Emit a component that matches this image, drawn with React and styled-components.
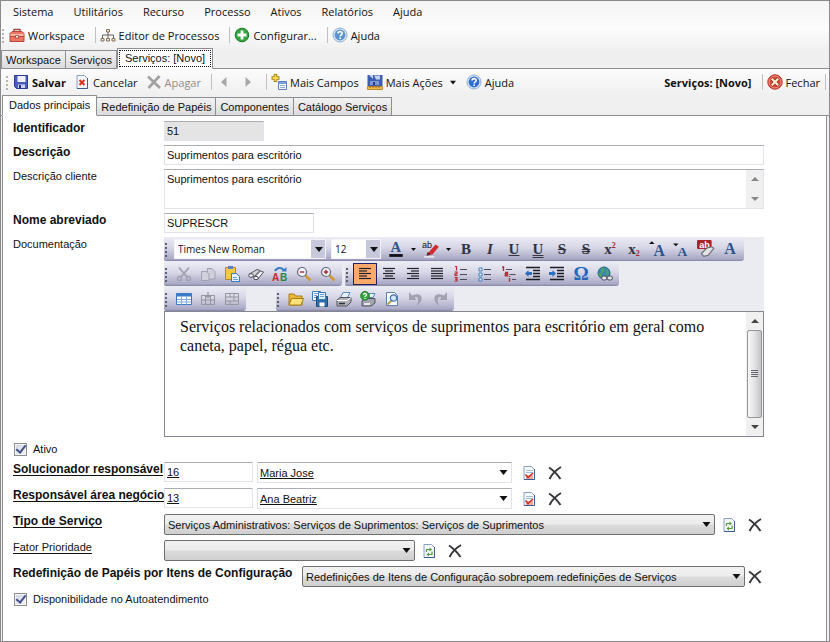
import React, { useState } from 'react';
import styled, { createGlobalStyle, css } from 'styled-components';

const GlobalStyle = createGlobalStyle`
  * {
    box-sizing: border-box;
  }
  body {
    margin: 0;
    font-family: "Liberation Sans", Arial, sans-serif;
    font-size: 11px;
    color: #111;
    background: #fff;
  }
  button, input, select, textarea {
    font: inherit;
    color: inherit;
    margin: 0;
    border-radius: 0;
  }
  button {
    border: 0;
    padding: 0;
    background: none;
  }
`;

const uiFont = '"Open Sans", "Segoe UI", sans-serif';

const Window = styled.div`
  min-height: 100vh;
  display: flex;
  flex-direction: column;
  border: 1px solid #8c8a8c;
  background: #f0f0f0;
`;

const Header = styled.header`
  background: linear-gradient(#f4f4f4, #fcfcfc 40%, #efefef 75%);
`;

const MenuBar = styled.nav`
  display: flex;
  gap: 2px;
  height: 21px;
  padding-left: 3px;
`;

const MenuItem = styled.button`
  padding: 0 9px;
  font-family: ${uiFont};
  font-size: 11px;
  line-height: 18px;
`;

const ToolBar = styled.div`
  display: flex;
  align-items: center;
  height: 26px;
  font-family: ${uiFont};
  font-size: 11px;
  padding-left: ${p => (p.$inset ? '4px' : '0')};
  background: ${p => (p.$inset ? 'linear-gradient(#fcfcfc, #f0f0f0)' : 'none')};
`;

const Grip = styled.span`
  flex: none;
  width: 8px;
  height: 15px;
  background: radial-gradient(circle at 2px 2px, ${p => p.$color || '#b4b4b8'} 1px, transparent 1px) 0 0 / 8px 4px;
`;

const ToolButton = styled.button`
  display: flex;
  align-items: center;
  gap: 3px;
  height: 22px;
  white-space: nowrap;
  font-weight: ${p => (p.$bold ? 'bold' : 'normal')};
  color: ${p => (p.disabled ? '#8d8d8d' : '#111')};

  & + & {
    margin-left: 8px;
  }
`;

const DropMark = styled.span`
  display: flex;
  padding: 0 2px 0 4px;
`;

const Separator = styled.span`
  width: 1px;
  height: 16px;
  margin: 0 4px 0 10px;
  background: #c0c0c2;
`;

const Title = styled.strong`
  margin-left: auto;
`;

const EdgeSeparator = styled(Separator)`
  margin: 0 3px 0 5px;
`;

const TabStrip = styled.div`
  display: flex;
  align-items: flex-end;
  height: 21px;
  padding-left: ${p => (p.$inset ? '1px' : '0')};
  background: ${p => (p.$inset ? '#f0f0f0' : 'none')};
  border-bottom: 1px solid #8c8e94;
`;

const Tab = styled.button`
  height: 18px;
  padding: 0 4px;
  border: 1px solid #8c8e94;
  border-bottom: 0;
  border-left-width: ${p => (p.$first || p.$active ? '1px' : '0')};
  background: linear-gradient(#f2f2f2, #dcdcde);
  white-space: nowrap;

  ${p => p.$active && css`
    height: 21px;
    padding: 0 6px 2px;
    margin-bottom: -1px;
    background: #fff;
    border-bottom: 1px solid #fff;
  `}
`;

const FocusedTab = styled(Tab)`
  padding: 0 1px;

  span {
    display: block;
    height: 17px;
    padding: 0 5px;
    line-height: 15px;
    border: 1px dotted #111;
  }
`;

const Panel = styled.main`
  flex: 1;
  margin: 0 2px 0 1px;
  padding: 5px 62px 5px 10px;
  border: 1px solid #8c8e94;
  border-width: 0 1px 0 1px;
  background: #fff;
`;

const Form = styled.form`
  display: flex;
  flex-direction: column;
  gap: 4px;
`;

const Row = styled.div`
  display: flex;
  align-items: flex-start;
`;

const LookupRow = styled(Row)`
  height: 22px;
  padding-top: 1px;
`;

const Label = styled.label`
  flex: none;
  width: ${p => (p.$wide ? '289px' : '151px')};
  font-size: ${p => (p.$bold ? '12px' : '11px')};
  font-weight: ${p => (p.$bold ? 'bold' : 'normal')};
  line-height: 14px;
  white-space: nowrap;
  text-decoration: ${p => (p.$link ? 'underline' : 'none')};
  text-underline-offset: 2px;
`;

const fieldBorder = css`
  border: 1px solid #e2e3ea;
  border-top-color: #abadb3;
`;

const TextInput = styled.input`
  ${fieldBorder}
  flex: ${p => (p.$width ? 'none' : 1)};
  width: ${p => (p.$width ? `${p.$width}px` : 'auto')};
  min-width: 0;
  height: 20px;
  padding: 0 2px;
  outline: none;
  text-decoration: ${p => (p.$link ? 'underline' : 'none')};
  background: ${p => (p.readOnly ? '#e4e4e4' : '#fff')};
`;

const CodeInput = styled(TextInput)`
  margin-right: 4px;
`;

const AreaBox = styled.div`
  ${fieldBorder}
  flex: 1;
  display: flex;
  height: 40px;
`;

const Area = styled.textarea`
  flex: 1;
  border: 0;
  outline: 0;
  resize: none;
  padding: 2px;
  line-height: 14px;
  overflow: hidden;
`;

const ScrollTrack = styled.div`
  flex: none;
  width: 17px;
  display: flex;
  flex-direction: column;
  justify-content: space-between;
  align-items: center;
  background: #f0f0f0;
`;

const ScrollButton = styled.button`
  display: grid;
  place-items: center;
  width: 17px;
  height: 18px;
`;

const ScrollThumb = styled.div`
  flex: 1;
  width: 15px;
  max-height: 88px;
  margin-bottom: auto;
  display: grid;
  place-items: center;
  border: 1px solid #97979a;
  border-radius: 2px;
  background: linear-gradient(90deg, #f6f6f6, #e6e6e8 45%, #c4c4c8);
`;

const SelectWrap = styled.span`
  position: relative;
  display: flex;
  flex: ${p => (p.$width ? 'none' : 1)};
  width: ${p => (p.$width ? `${p.$width}px` : 'auto')};
  min-width: 0;

  svg {
    position: absolute;
    right: 4px;
    top: 8px;
    pointer-events: none;
  }
`;

const SelectBox = styled.select`
  appearance: none;
  width: 100%;
  height: 21px;
  padding: 0 18px 0 3px;
  outline: none;

  ${p => p.$flat ? css`
    ${fieldBorder}
    padding-left: 2px;
    background: #fff;
    text-decoration: underline;
  ` : css`
    border: 1px solid #707070;
    border-radius: 2px;
    background: linear-gradient(#f2f2f2, #ebebeb 48%, #dcdcdc 52%, #cfcfcf);
  `}
`;

const RowIcons = styled.span`
  display: flex;
  align-items: center;
  height: 22px;
  gap: 10px;
  padding: 0 1px 0 ${p => p.$lead}px;
`;

const IconButton = styled.button`
  display: grid;
  place-items: center;
  width: 16px;
  height: 20px;
`;

const TickRow = styled.label`
  display: flex;
  align-items: center;
  gap: 6px;
  height: 16px;
  padding-left: 1px;
`;

const Tick = styled.input`
  appearance: none;
  display: grid;
  place-items: center;
  width: 13px;
  height: 13px;
  border: 1px solid #8e8f8f;
  background: linear-gradient(135deg, #cfd4de, #f6f7f9);
  box-shadow: inset 0 0 0 1px #f4f4f4;

  &:checked::after {
    content: "";
    width: 4px;
    height: 8px;
    margin-top: -2px;
    border: solid #43518f;
    border-width: 0 2px 2px 0;
    transform: rotate(38deg);
  }
`;

const Editor = styled.div`
  flex: 1;
  min-width: 0;
`;

const EditorBars = styled.div`
  display: flex;
  flex-direction: column;
  gap: 1px;
  background: #ebecf2;
`;

const BarLine = styled.div`
  display: flex;
  gap: ${p => p.$gap || 0}px;
`;

const Bar = styled.div`
  display: flex;
  align-items: center;
  height: 24px;
  padding-right: 2px;
  border-radius: 2px 3px 3px 2px;
  background: linear-gradient(#ececf5, #d6d6e6 45%, #a9a8c6 92%, #8482a2);
`;

const BarButton = styled.button`
  display: grid;
  place-items: center;
  width: 24px;
  height: 22px;
  border: ${p => (p.$active ? '1px solid #20206c' : '0')};
  background: ${p => (p.$active ? '#fcaa6c' : 'none')};
`;

const SplitArrow = styled.button`
  display: grid;
  place-items: center;
  width: 11px;
  height: 22px;
`;

const BarSelect = styled.span`
  position: relative;
  display: flex;
  width: ${p => p.$width}px;
  margin: 0 ${p => p.$after}px 0 ${p => p.$before}px;

  select {
    appearance: none;
    width: 100%;
    height: 20px;
    padding: 0 16px 0 3px;
    border: 1px solid #f2f2f8;
    outline: none;
    background: linear-gradient(90deg, #fff calc(100% - 14px), #c8c8dc calc(100% - 14px));
    font-family: ${uiFont};
    font-size: 10px;
  }

  svg {
    position: absolute;
    right: 3px;
    top: 8px;
    pointer-events: none;
  }
`;

const Glyph = styled.span`
  font-family: "Liberation Serif", "Times New Roman", serif;
  font-size: ${p => p.$size || 15}px;
  font-weight: bold;
  font-style: ${p => (p.$italic ? 'italic' : 'normal')};
  line-height: 18px;
  color: ${p => p.$color || '#34343e'};
  text-decoration: ${p => p.$line || 'none'};
  text-decoration-thickness: 1px;
  white-space: nowrap;

  small {
    font-size: 8px;
    line-height: 0;
    color: #b0202c;
    vertical-align: ${p => (p.$sub ? '-2px' : '6px')};
  }
`;

const Document = styled.div`
  display: flex;
  height: 126px;
  border: 1px solid #828790;
`;

const DocumentText = styled.textarea`
  flex: 1;
  border: 0;
  outline: none;
  resize: none;
  padding: 5px 15px;
  overflow: hidden;
  font-family: "Liberation Serif", "Times New Roman", serif;
  font-size: 16px;
  line-height: 19px;
`;

const Svg = ({ children, size = 16 }) => (
  <svg width={size} height={size} viewBox="0 0 16 16" fill="none" aria-hidden="true">{children}</svg>
);

const Caret = ({ w = 7 }) => (
  <svg width={w} height="5" viewBox="0 0 8 5" aria-hidden="true"><path d="M0 0h8L4 5z" fill="#111" /></svg>
);

const ScrollArrow = ({ up, color = '#555' }) => (
  <svg width="8" height="4" viewBox="0 0 8 4"><path d={up ? 'M0 4h8L4 0z' : 'M0 0h8L4 4z'} fill={color} /></svg>
);

const Page = ({ children }) => (
  <>
    <path d="M3 1.5h7.5L13.5 4.5v10H3z" fill="#f4f8ff" stroke="#8aa0c0" />
    <path d="M13.5 4v10.5H3" stroke="#3d5c90" />
    {children}
  </>
);

const Help = ({ soft }) => (
  <Svg>
    <circle cx="8" cy="8" r="7" fill="#dce9f7" stroke="#8fb0d4" />
    <circle cx="8" cy="8" r="5.4" fill={soft ? '#5b93cc' : '#2f6fd0'} />
    <path d="M6 6.6c0-2.6 4.2-2.6 4.2-.2 0 1.5-2 1.5-2 3M8.2 10.6v1.4" stroke="#fff" strokeWidth="1.6" />
  </Svg>
);

const Lines = ({ rows }) => (
  <Svg>
    {rows.map(([x, w], i) => <path key={i} d={`M${x} ${2.5 + i * 2.5}h${w}`} stroke="#22222c" strokeWidth="1.2" />)}
  </Svg>
);

const icons = {
  toolbox: (
    <Svg>
      <path d="M5 5V2.5h6V5" stroke="#a04a40" strokeWidth="1.4" />
      <path d="M1 6.5L3 4.5h10l2 2v8H1z" fill="#ee7565" stroke="#b8483c" />
      <path d="M1.5 7h13v2h-13z" fill="#fbb8aa" />
      <path d="M1 9.5h14" stroke="#b8483c" />
      <path d="M6.5 8.5h3V11h-3z" fill="#ffe9d8" stroke="#8a3a30" strokeWidth=".7" />
    </Svg>
  ),
  tree: (
    <Svg>
      <path d="M8 5v3M2.5 11V8h11v3M8 8v3" stroke="#66605c" />
      <path d="M6.5 2.5h3V5h-3zM1 11.5h3V14H1zM6.5 11.5h3V14h-3zM12 11.5h3V14h-3z" fill="#f5ecd8" stroke="#85705a" />
    </Svg>
  ),
  plus: (
    <Svg>
      <circle cx="8" cy="8" r="6.8" fill="#31a63a" stroke="#1c7a28" />
      <path d="M8 3.5v9M3.5 8h9" stroke="#fff" strokeWidth="2.8" />
    </Svg>
  ),
  save: (
    <Svg>
      <path d="M1.5 1.5h13v13h-11l-2-2z" fill="#4a5fc0" stroke="#2c3a94" />
      <path d="M4.5 2h8v6h-8z" fill="#eef1fb" />
      <path d="M5 10.5h7V14H5z" fill="#cfd5ec" />
      <path d="M6 11h2v3H6z" fill="#27327c" />
    </Svg>
  ),
  cancel: <Svg><Page><path d="M5.5 6l5 5M10.5 6l-5 5" stroke="#d8301c" strokeWidth="2" /></Page></Svg>,
  erase: <Svg><path d="M2 2.5L14 14M13.5 2L2.5 14" stroke="#a2a2a2" strokeWidth="2.6" /></Svg>,
  prev: <Svg><path d="M10.5 3v10L5 8z" fill="#a9a9a9" /></Svg>,
  next: <Svg><path d="M5.5 3v10L11 8z" fill="#a9a9a9" /></Svg>,
  fields: (
    <Svg>
      <path d="M4.5 0v8M.5 4h8" stroke="#a58214" strokeWidth="3.6" />
      <path d="M4.5 1v6M1.5 4h6" stroke="#f8dc50" strokeWidth="1.8" />
      <path d="M7.5 7.5h8v8h-8z" fill="#f4f9ff" stroke="#5c82be" />
      <path d="M8 8h7v2H8z" fill="#7ca4dc" />
      <path d="M9 11.5h5M9 13.5h5" stroke="#90b0dc" />
    </Svg>
  ),
  actions: (
    <Svg>
      <path d="M.5 1h15v11H.5z" fill="#3d5db2" />
      <path d="M2 1l4 4V1zM7 1.5h6v4H9z" fill="#c4d0ee" />
      <path d="M3 7h9v4H3z" fill="#8298d4" />
      <path d="M6 8h2v3H6z" fill="#263c84" />
      <path d="M.5 12.5h15v3H.5z" fill="#f0bc48" stroke="#ac7418" strokeWidth=".8" />
      <path d="M3 12v2M6 12v2M9 12v2M12 12v2" stroke="#7c5410" strokeWidth=".8" />
    </Svg>
  ),
  close: (
    <Svg>
      <circle cx="8" cy="8" r="7.2" fill="#da4636" stroke="#b43020" />
      <circle cx="8" cy="8" r="6" stroke="#f0988c" />
      <path d="M4.5 4.5l7 7M11.5 4.5l-7 7" stroke="#9a3024" strokeWidth="3.2" />
      <path d="M4.8 4.8l6.4 6.4M11.2 4.8l-6.4 6.4" stroke="#fff2d8" strokeWidth="2" />
    </Svg>
  ),
  remove: <Svg><path d="M2 2.5C6 5 10 9 13.5 14M14 2C9 5 5 9 2.5 14" stroke="#38383c" strokeWidth="2" /></Svg>,
  lookup: (
    <Svg>
      <Page>
        <path d="M5 5.5h7M5 7.5h7" stroke="#a9bcdc" />
        <path d="M5 10h7v4H5z" fill="#e9aaa4" />
        <path d="M4.5 9.5l2.5 3 5-4.5" stroke="#cc3428" strokeWidth="1.6" />
      </Page>
    </Svg>
  ),
  refresh: (
    <Svg>
      <Page>
        <path d="M5.5 9V6.5H9M11 8.5v3H7.5" stroke="#549a38" strokeWidth="1.2" />
        <path d="M8.5 4.5l2.5 2-2.5 2zM8 9.5l-2.5 2 2.5 2z" fill="#549a38" />
      </Page>
    </Svg>
  ),
  cut: (
    <Svg>
      <path d="M3 1.5l8 9.5M13 1.5L5 11" stroke="#a0a0b2" strokeWidth="1.8" />
      <circle cx="3.5" cy="12.5" r="2" stroke="#a0a0b2" strokeWidth="1.6" />
      <circle cx="12.5" cy="12.5" r="2" stroke="#a0a0b2" strokeWidth="1.6" />
    </Svg>
  ),
  copy: (
    <Svg>
      <path d="M7.5 2.5H12l3 3V13H7.5z" fill="#d0d0dc" stroke="#a0a0b2" />
      <path d="M1.5 5.5h5L9 8v6.5H1.5z" fill="#d0d0dc" stroke="#a0a0b2" />
    </Svg>
  ),
  paste: (
    <Svg>
      <path d="M1.5 1.5h10v12h-10z" fill="#f6c944" stroke="#b48820" />
      <path d="M4 0h5v3H4z" fill="#5c82b4" />
      <path d="M7.5 7.5h5l3 3v5h-8z" fill="#e6f2ff" stroke="#3878bc" />
      <path d="M9 11.5h4M9 13.5h5" stroke="#6ca0d8" />
    </Svg>
  ),
  find: (
    <Svg>
      <path d="M1.5 8L9 3.5l3 1L5.5 11z" fill="#d4d4da" stroke="#54545e" />
      <path d="M6 11.5L12.5 5l3 1L10 13z" fill="#f3f3f5" stroke="#54545e" />
      <ellipse cx="3" cy="9.5" rx="2.3" ry="1.8" fill="#fff" stroke="#44444e" />
      <ellipse cx="8" cy="12" rx="2.3" ry="1.7" fill="#fff" stroke="#44444e" />
    </Svg>
  ),
  zoomOut: (
    <Svg>
      <path d="M9 9l5.5 5.5" stroke="#cf9a38" strokeWidth="2.6" />
      <circle cx="6" cy="6" r="4.5" fill="#f6f6fc" stroke="#66667c" strokeWidth="1.2" />
      <path d="M3.8 6h4.4" stroke="#a82828" strokeWidth="1.4" />
    </Svg>
  ),
  zoomIn: (
    <Svg>
      <path d="M9 9l5.5 5.5" stroke="#cf9a38" strokeWidth="2.6" />
      <circle cx="6" cy="6" r="4.5" fill="#f6f6fc" stroke="#66667c" strokeWidth="1.2" />
      <path d="M3.8 6h4.4M6 3.8v4.4" stroke="#a82828" strokeWidth="1.4" />
    </Svg>
  ),
  left: <Lines rows={[[2, 12], [2, 8], [2, 12], [2, 8], [2, 12]]} />,
  center: <Lines rows={[[2, 12], [4, 8], [2, 12], [4, 8], [2, 12]]} />,
  right: <Lines rows={[[2, 12], [6, 8], [2, 12], [6, 8], [2, 12]]} />,
  justify: <Lines rows={[[2, 12], [2, 12], [2, 12], [2, 12], [2, 12]]} />,
  numbered: (
    <Svg>
      <path d="M2 .5h1.5v4M1.5 6H4v1.8H2v1.7h2.5M1.5 11.5H4V15H1.5M2 13.2h2" stroke="#bc2830" strokeWidth="1.2" />
      <path d="M7 3.5h7M7 8.5h7M7 13.5h7" stroke="#4c4c60" strokeWidth="1.2" />
    </Svg>
  ),
  bullets: (
    <Svg>
      <path d="M2 2h3v3H2zM2 7h3v3H2zM2 12h3v3H2z" fill="#e8f2ff" stroke="#3f7ec4" />
      <path d="M7 3.5h7M7 8.5h7M7 13.5h7" stroke="#4c4c60" strokeWidth="1.2" />
    </Svg>
  ),
  outline: (
    <Svg>
      <path d="M1 1h1.5v4M4 6.5h2.5v3.2H4.3V8H6M8.5 12v3.5M8.5 10v1" stroke="#bc2830" strokeWidth="1.4" />
      <path d="M5 3.5h6M8.5 8.5h6M11 13.5h4" stroke="#4c4c60" strokeWidth="1.2" />
    </Svg>
  ),
  outdent: (
    <Svg>
      <path d="M1 1.5h14M8 4.5h7M8 7.5h7M8 10.5h7M1 13.5h14" stroke="#1c1c26" strokeWidth="1.4" />
      <path d="M0 7.5L3.5 4v2H7v3H3.5v2z" fill="#2c70c2" />
    </Svg>
  ),
  indent: (
    <Svg>
      <path d="M1 1.5h14M8 4.5h7M8 7.5h7M8 10.5h7M1 13.5h14" stroke="#1c1c26" strokeWidth="1.4" />
      <path d="M7 7.5L3.5 4v2H0v3h3.5v2z" fill="#2c70c2" />
    </Svg>
  ),
  link: (
    <Svg>
      <circle cx="7" cy="7" r="6" fill="#3a88ae" stroke="#286484" />
      <path d="M4 2c3 0 4 2 2 4s-4 1-4 2 2 3 3 4M10 3l2 4-3 2" fill="#4ca468" stroke="#4ca468" />
      <rect x="4.5" y="10" width="5.5" height="4" rx="2" fill="#e2e2ea" stroke="#50505e" />
      <rect x="10" y="10" width="5.5" height="4" rx="2" fill="#e2e2ea" stroke="#50505e" />
    </Svg>
  ),
  table: (
    <Svg>
      <path d="M.5 2.5h15v11H.5z" fill="#fff" stroke="#3c78c4" />
      <path d="M.5 2.5h15v3H.5z" fill="#3c7ccc" />
      <path d="M1 8.5h14M1 11h14M5.5 5.5v8M10.5 5.5v8" stroke="#84aade" />
    </Svg>
  ),
  rowAdd: (
    <Svg>
      <path d="M1.5 4.5h13v9h-13zM1.5 9h13M5.5 4.5v9M10.5 4.5v9" stroke="#96969f" />
      <path d="M8 1v6M6 5l2 2 2-2" stroke="#88889a" />
    </Svg>
  ),
  rowDelete: <Svg><path d="M1.5 2.5h13v11h-13zM1.5 6h13M1.5 10h13M6 2.5V6M10 6v4M6 10v3.5M10 2.5V6" stroke="#96969f" /></Svg>,
  open: (
    <Svg>
      <path d="M1 3h5l1.5 2H14v9H1z" fill="#ecb934" stroke="#a87c14" />
      <path d="M3.5 7.5h12L13 14H1z" fill="#fde27a" stroke="#a87c14" />
    </Svg>
  ),
  disk: (
    <Svg>
      <path d="M.5.5h8v9h-8z" fill="#fff" stroke="#3c7ab8" />
      <path d="M2 2.5h5M2 4.5h3M2 6.5h3" stroke="#6ca0d8" />
      <path d="M4.5 5.5h11v10h-11z" fill="#2c6ea8" stroke="#1c4c7c" />
      <path d="M6.5 1.5h7v7h-7z" fill="#e4f0fb" stroke="#3c7ab8" />
      <path d="M8 3.5h4M8 5.5h4" stroke="#6ca0d8" />
      <path d="M7.5 11.5h5v4h-5z" fill="#fff" />
    </Svg>
  ),
  print: (
    <Svg>
      <path d="M7 1.5h7l-3 6H4z" fill="#e8f2ff" stroke="#5888bc" />
      <path d="M1 9l3-2.5h11V11l-4 4H1z" fill="#b0b0b8" stroke="#54545e" />
      <path d="M1 9.5h10l4-3" stroke="#fff" />
      <path d="M3 12.5h6" stroke="#33333c" strokeWidth="1.5" />
    </Svg>
  ),
  printHelp: (
    <Svg>
      <path d="M9 2.5h6l-2 4H8z" fill="#e8f2ff" stroke="#5888bc" />
      <path d="M2 10l3-2.5h10V12l-4 3H2z" fill="#a4a4ae" stroke="#54545e" />
      <path d="M4 13h6" stroke="#fff" strokeWidth="1.5" />
      <circle cx="5" cy="4.8" r="4.3" fill="#32a838" stroke="#1c7c24" />
      <path d="M3.5 3.8c0-1.8 3-1.8 3 0 0 1-1.5 1-1.5 2.2M5 7v1" stroke="#fff" strokeWidth="1.3" />
    </Svg>
  ),
  preview: (
    <Svg>
      <path d="M2.5 1.5h8l3 3v10h-11z" fill="#fff" stroke="#5c82b0" />
      <path d="M7.5 9.5L3.5 13.5" stroke="#c49a3c" strokeWidth="2" />
      <circle cx="9.5" cy="7" r="3.2" fill="#d2e8fa" stroke="#3f74ac" strokeWidth="1.2" />
    </Svg>
  ),
  undo: <Svg><path d="M1 1v8h8L6.5 6.5c3-1.5 5 1 2.5 8.5 7-5 6-13-1.5-11.5L4 4.5z" fill="#a2a2b2" /></Svg>,
  redo: <Svg><path d="M15 1v8H7l2.5-2.5C6.5 5 4.5 7.5 7 15 0 10 1 2 8.5 3.5l3.5 1z" fill="#a2a2b2" /></Svg>,
};

const FontColor = () => (
  <Svg size={18}>
    <text x="3" y="11" fontFamily="Liberation Serif" fontWeight="bold" fontSize="13" fill="#2c548c">A</text>
    <path d="M2 12.5h12V15H2z" fill="#10101c" />
  </Svg>
);

const Highlight = () => (
  <Svg size={18}>
    <path d="M5 12l7-8 3 2-6 7z" fill="#d02c30" />
    <path d="M5 10.5l3 2.5-4 1z" fill="#6c2420" />
    <path d="M2 15h9" stroke="#e8e8f0" strokeWidth="1.5" />
    <text x="0" y="7" fontFamily="Liberation Sans" fontSize="8" fill="#111">ab</text>
  </Svg>
);

const Replace = () => (
  <Svg>
    <text x="0" y="15" fontFamily="Liberation Sans" fontWeight="bold" fontSize="10" fill="#c8282c">A</text>
    <text x="8" y="15" fontFamily="Liberation Sans" fontWeight="bold" fontSize="10" fill="#2c8448">B</text>
    <path d="M3 5c2-4 7-4 9-.5" stroke="#3c7cc4" strokeWidth="2" />
    <path d="M9.5 5.5h5V1z" fill="#3c7cc4" />
  </Svg>
);

const ClearFormat = () => (
  <Svg size={18}>
    <rect x="0" y="0" width="13" height="8" rx="1" fill="#b02028" />
    <text x="2" y="7" fontFamily="Liberation Sans" fontWeight="bold" fontSize="8" fill="#fff">ab</text>
    <path d="M4 12l5-5 4-1 2 1.5-5 6-4 1z" fill="#e4e4e8" stroke="#6a6a74" />
  </Svg>
);

const Grow = ({ down }) => (
  <Svg size={18}>
    <path d={down ? 'M0 3h5L2.5 5.5z' : 'M0 3.5h5L2.5 1z'} fill="#111" />
    <text x="4" y="14" fontFamily="Liberation Serif" fontWeight="bold" fontSize={down ? 12 : 14} fill="#2c548c">A</text>
  </Svg>
);

const formats = [
  ['Negrito', <Glyph>B</Glyph>],
  ['Itálico', <Glyph $italic>I</Glyph>],
  ['Sublinhado', <Glyph $line="underline">U</Glyph>],
  ['Sublinhado duplo', <Glyph $line="underline double">U</Glyph>],
  ['Tachado', <Glyph $line="line-through">S</Glyph>],
  ['Tachado duplo', <Glyph $line="line-through double">S</Glyph>],
  ['Sobrescrito', <Glyph>x<small>2</small></Glyph>],
  ['Subscrito', <Glyph $sub>x<small>2</small></Glyph>],
  ['Aumentar fonte', <Grow />],
  ['Diminuir fonte', <Grow down />],
  ['Limpar formatação', <ClearFormat />],
  ['Fonte', <Glyph $color="#2c548c" $size={16}>A</Glyph>],
];

const clipboard = [
  ['Recortar', icons.cut], ['Copiar', icons.copy], ['Colar', icons.paste], ['Localizar', icons.find],
  ['Substituir', <Replace />], ['Reduzir', icons.zoomOut], ['Ampliar', icons.zoomIn],
];

const paragraph = [
  ['Esquerda', icons.left], ['Centro', icons.center], ['Direita', icons.right], ['Justificar', icons.justify],
  ['Numeração', icons.numbered], ['Marcadores', icons.bullets], ['Vários níveis', icons.outline],
  ['Diminuir recuo', icons.outdent], ['Aumentar recuo', icons.indent],
  ['Símbolo', <Glyph $color="#2468bc" $size={19}>Ω</Glyph>], ['Link', icons.link],
];

const tables = [['Tabela', icons.table], ['Inserir linha', icons.rowAdd], ['Excluir linha', icons.rowDelete]];

const files = [
  ['Abrir', icons.open], ['Salvar documento', icons.disk], ['Imprimir', icons.print],
  ['Configurar impressão', icons.printHelp], ['Visualizar', icons.preview],
  ['Desfazer', icons.undo], ['Refazer', icons.redo],
];

function EditorBar({ items, active, children }) {
  return (
    <Bar>
      <Grip $color="#5c5c74" />
      {children}
      {items.map(([name, icon]) => (
        <BarButton key={name} type="button" title={name} aria-label={name} $active={name === active}>{icon}</BarButton>
      ))}
    </Bar>
  );
}

function Scroll({ thumb }) {
  return (
    <ScrollTrack>
      <ScrollButton type="button" aria-label="Rolar para cima"><ScrollArrow up color={thumb ? '#444' : '#888'} /></ScrollButton>
      {thumb && (
        <ScrollThumb>
          <svg width="7" height="8" viewBox="0 0 7 8"><path d="M0 .5h7M0 2.5h7M0 4.5h7M0 6.5h7" stroke="#66666c" /></svg>
        </ScrollThumb>
      )}
      <ScrollButton type="button" aria-label="Rolar para baixo"><ScrollArrow color={thumb ? '#444' : '#888'} /></ScrollButton>
    </ScrollTrack>
  );
}

function Select({ id, value, width, flat, label }) {
  return (
    <SelectWrap $width={width}>
      <SelectBox id={id} $flat={flat} aria-label={label} defaultValue={value}>
        <option value={value}>{value}</option>
      </SelectBox>
      <Caret w={9} />
    </SelectWrap>
  );
}

function RowActions({ icon, lead = 6 }) {
  return (
    <RowIcons $lead={lead}>
      {icon && <IconButton type="button" aria-label="Consultar">{icon}</IconButton>}
      <IconButton type="button" aria-label="Remover">{icons.remove}</IconButton>
    </RowIcons>
  );
}

function PersonRow({ id, label, code, name }) {
  return (
    <LookupRow>
      <Label htmlFor={id} $bold $link>{label}</Label>
      <CodeInput id={id} $width={89} $link defaultValue={code} />
      <Select flat width={255} value={name} label={`${label} nome`} />
      <RowActions icon={icons.lookup} lead={9} />
    </LookupRow>
  );
}

const menus = ['Sistema', 'Utilitários', 'Recurso', 'Processo', 'Ativos', 'Relatórios', 'Ajuda'];

export default function App() {
  const [active, setActive] = useState(true);
  const [selfService, setSelfService] = useState(true);

  return (
    <>
      <GlobalStyle />
      <Window>
        <Header>
          <MenuBar>
            {menus.map(m => <MenuItem key={m} type="button">{m}</MenuItem>)}
          </MenuBar>
          <ToolBar>
            <Grip />
            <ToolButton>{icons.toolbox}Workspace</ToolButton>
            <Separator />
            <ToolButton>{icons.tree}Editor de Processos</ToolButton>
            <Separator />
            <ToolButton>{icons.plus}Configurar...</ToolButton>
            <Separator />
            <ToolButton><Help soft />Ajuda</ToolButton>
          </ToolBar>
          <TabStrip>
            <Tab type="button" $first>Workspace</Tab>
            <Tab type="button">Serviços</Tab>
            <FocusedTab type="button" $active><span>Serviços: [Novo]</span></FocusedTab>
          </TabStrip>
        </Header>
        <ToolBar $inset>
          <Grip />
          <ToolButton $bold>{icons.save}Salvar</ToolButton>
          <ToolButton>{icons.cancel}Cancelar</ToolButton>
          <ToolButton disabled>{icons.erase}Apagar</ToolButton>
          <Separator />
          <ToolButton aria-label="Anterior" disabled>{icons.prev}</ToolButton>
          <ToolButton aria-label="Próximo" disabled>{icons.next}</ToolButton>
          <Separator />
          <ToolButton>{icons.fields}Mais Campos</ToolButton>
          <ToolButton>{icons.actions}Mais Ações<DropMark><Caret w={6} /></DropMark></ToolButton>
          <ToolButton><Help />Ajuda</ToolButton>
          <Title>Serviços: [Novo]</Title>
          <Separator />
          <ToolButton>{icons.close}Fechar</ToolButton>
          <EdgeSeparator />
        </ToolBar>
        <TabStrip $inset>
          <Tab type="button" $active>Dados principais</Tab>
          <Tab type="button">Redefinição de Papéis</Tab>
          <Tab type="button">Componentes</Tab>
          <Tab type="button">Catálogo Serviços</Tab>
        </TabStrip>
        <Panel>
          <Form onSubmit={e => e.preventDefault()}>
            <Row>
              <Label htmlFor="ident" $bold>Identificador</Label>
              <TextInput id="ident" $width={100} readOnly value="51" />
            </Row>
            <Row>
              <Label htmlFor="descricao" $bold>Descrição</Label>
              <TextInput id="descricao" defaultValue="Suprimentos para escritório" />
            </Row>
            <Row>
              <Label htmlFor="cliente">Descrição cliente</Label>
              <AreaBox>
                <Area id="cliente" defaultValue="Suprimentos para escritório" />
                <Scroll />
              </AreaBox>
            </Row>
            <Row>
              <Label htmlFor="nome" $bold>Nome abreviado</Label>
              <TextInput id="nome" $width={150} defaultValue="SUPRESCR" />
            </Row>
            <Row>
              <Label htmlFor="doc">Documentação</Label>
              <Editor>
                <EditorBars>
                  <BarLine>
                    <EditorBar items={formats}>
                      <BarSelect $width={152} $before={2} $after={5}>
                        <select aria-label="Nome da fonte"><option>Times New Roman</option></select>
                        <Caret w={8} />
                      </BarSelect>
                      <BarSelect $width={50} $before={0} $after={3}>
                        <select aria-label="Tamanho da fonte"><option>12</option></select>
                        <Caret w={8} />
                      </BarSelect>
                      <BarButton type="button" aria-label="Cor da fonte"><FontColor /></BarButton>
                      <SplitArrow type="button" aria-label="Escolher cor"><Caret w={5} /></SplitArrow>
                      <BarButton type="button" aria-label="Realce"><Highlight /></BarButton>
                      <SplitArrow type="button" aria-label="Escolher realce"><Caret w={5} /></SplitArrow>
                    </EditorBar>
                  </BarLine>
                  <BarLine $gap={3}>
                    <EditorBar items={clipboard} />
                    <EditorBar items={paragraph} active="Esquerda" />
                  </BarLine>
                  <BarLine $gap={30}>
                    <EditorBar items={tables} />
                    <EditorBar items={files} />
                  </BarLine>
                </EditorBars>
                <Document>
                  <DocumentText
                    id="doc"
                    defaultValue="Serviços relacionados com serviços de suprimentos para escritório em geral como caneta, papel, régua etc."
                  />
                  <Scroll thumb />
                </Document>
              </Editor>
            </Row>
            <TickRow>
              <Tick type="checkbox" checked={active} onChange={e => setActive(e.target.checked)} />
              Ativo
            </TickRow>
            <PersonRow id="solucionador" label="Solucionador responsável" code="16" name="Maria Jose" />
            <PersonRow id="responsavel" label="Responsável área negócio" code="13" name="Ana Beatriz" />
            <LookupRow>
              <Label htmlFor="tipo" $bold $link>Tipo de Serviço</Label>
              <Select id="tipo" value="Serviços Administrativos: Serviços de Suprimentos: Serviços de Suprimentos" />
              <RowActions icon={icons.refresh} />
            </LookupRow>
            <LookupRow>
              <Label htmlFor="fator" $link>Fator Prioridade</Label>
              <Select id="fator" width={251} value="" />
              <RowActions icon={icons.refresh} />
            </LookupRow>
            <LookupRow>
              <Label htmlFor="papeis" $bold $wide>Redefinição de Papéis por Itens de Configuração</Label>
              <Select id="papeis" value="Redefinições de Itens de Configuração sobrepoem redefinições de Serviços" />
              <RowActions lead={2} />
            </LookupRow>
            <TickRow>
              <Tick type="checkbox" checked={selfService} onChange={e => setSelfService(e.target.checked)} />
              Disponibilidade no Autoatendimento
            </TickRow>
          </Form>
        </Panel>
      </Window>
    </>
  );
}
